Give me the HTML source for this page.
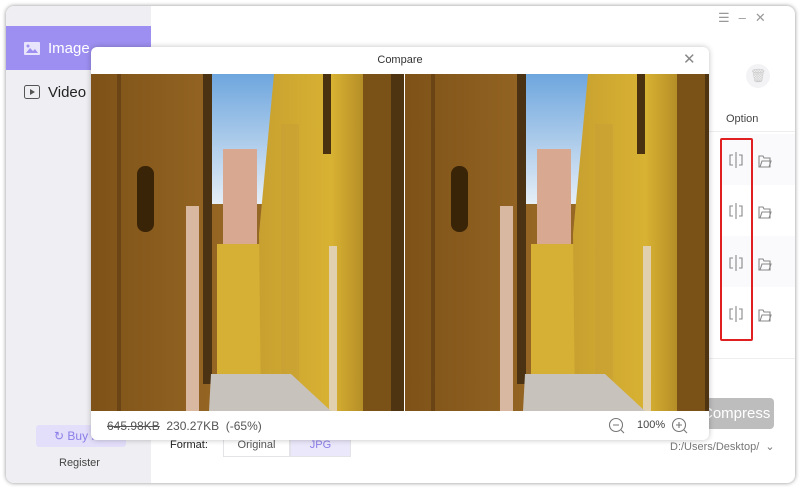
<!DOCTYPE html>
<html><head><meta charset="utf-8"><style>
*{margin:0;padding:0;box-sizing:border-box}
body{width:800px;height:488px;background:#fff;font-family:"Liberation Sans","Noto Sans CJK SC",sans-serif;position:relative;overflow:hidden}
.win{position:absolute;left:6px;top:6px;width:789px;height:477px;background:#fff;border-radius:8px;box-shadow:0 0 4px rgba(0,0,0,.45);overflow:hidden}
.side{position:absolute;left:0;top:0;width:145px;height:477px;background:#efeff3}
.nav{position:absolute;left:0;width:145px;height:44px;font-size:15px;color:#222;display:flex;align-items:center;padding-left:18px}
.abs{position:absolute}
.row{position:absolute;left:714px;width:75px;height:51px}
.dlg{position:absolute;left:91px;top:47px;width:618px;height:393px;background:#fff;border-radius:6px;box-shadow:0 0 6px rgba(0,0,0,.25);overflow:hidden}
</style></head><body>
<div class="win">
 <div class="side">
  <div class="nav" style="top:20px;background:#9d8ff1;color:#fff"><svg width="16" height="13" style="margin-right:8px"><rect x="0" y="0" width="16" height="13" rx="1" fill="#e8e4fc"/><path d="M2 11 L6 6 L9 9 L11 7 L14 11Z" fill="#9d8ff1"/><circle cx="4" cy="4" r="1.5" fill="#9d8ff1"/></svg>Image</div>
  <div class="nav" style="top:64px"><svg width="16" height="14" style="margin-right:8px"><rect x="0.5" y="0.5" width="15" height="13" rx="2" fill="none" stroke="#555"/><path d="M6 4 L11 7 L6 10Z" fill="#555"/></svg>Video</div>
  <div class="abs" style="left:30px;top:419px;width:90px;height:22px;background:#e3defa;border-radius:3px;color:#8a7ee8;font-size:12px;padding:4px 0 0 18px">↻ Buy Now</div>
  <div class="abs" style="left:53px;top:451px;font-size:11px;color:#444">Register</div>
 </div>
 <div class="abs" style="left:712px;top:4px;font-size:13px;color:#999;letter-spacing:9px">☰–✕</div>
 <div class="abs" style="left:740px;top:58px;width:24px;height:24px;border-radius:12px;background:#f3f3f5;color:#ccc;font-size:13px;text-align:center;line-height:24px">🗑</div>
 <div class="abs" style="left:720px;top:107px;font-size:11px;color:#444">Option</div>
 <div class="abs" style="left:700px;top:125px;width:89px;height:1px;background:#eee"></div>
 <div class="row" style="top:128px;background:#fafafc"></div>
 <div class="row" style="top:230px;background:#fafafc"></div>
 <div class="abs" style="left:714px;top:132px;width:33px;height:203px;border:2px solid #e02020;border-radius:2px"></div>
 <div class="abs" style="left:700px;top:352px;width:89px;height:1px;background:#eee"></div>
 <div class="abs" style="left:690px;top:392px;width:78px;height:31px;background:#bdbdbd;border-radius:4px;color:#fff;font-size:15px;line-height:31px;padding-left:6px">Compress</div>
 <div class="abs" style="left:664px;top:434px;font-size:11px;color:#777">D:/Users/Desktop/ &nbsp;⌄</div>
 <div class="abs" style="left:164px;top:433px;font-size:11px;color:#222">Format:</div>
 <div class="abs" style="left:217px;top:428px;width:67px;height:23px;border:1px solid #e4e4e8;font-size:11px;color:#555;text-align:center;line-height:21px">Original</div>
 <div class="abs" style="left:284px;top:428px;width:61px;height:23px;background:#ebe8fb;border:1px solid #e4e4e8;font-size:11px;color:#8a7ee8;text-align:center;line-height:21px">JPG</div>
</div>
<svg class="abs" style="left:0;top:0" width="800" height="488">
 <g fill="none" stroke="#888" stroke-width="1.1">
  <g id="ic"><path d="M733 155 h-3 v10 h3 M739 155 h3 v10 h-3"/><path d="M736 152 v16"/><path d="M759 156 h4 l1 2 h6 v9 h-11z M760 167 l2-6 h9 l-2 6"/></g>
  <use href="#ic" y="51"/><use href="#ic" y="103"/><use href="#ic" y="154"/>
 </g>
</svg>
<div class="dlg">
 <div class="abs" style="left:0;top:7px;width:618px;text-align:center;font-size:11px;color:#333">Compare</div>
 <div class="abs" style="left:592px;top:3px;font-size:15px;color:#888">✕</div>
 <svg class="abs" style="left:0;top:27px" width="618" height="337">
  <defs>
   <linearGradient id="sky" x1="0" y1="0" x2="0" y2="1"><stop offset="0" stop-color="#6ea6de"/><stop offset="1" stop-color="#e6eef6"/></linearGradient>
   <linearGradient id="lw" x1="0" y1="0" x2="1" y2="0"><stop offset="0" stop-color="#7e5218"/><stop offset=".5" stop-color="#9a6a26"/><stop offset="1" stop-color="#6a4616"/></linearGradient>
   <linearGradient id="rw" x1="0" y1="0" x2="1" y2="0"><stop offset="0" stop-color="#c8a030"/><stop offset=".5" stop-color="#d8b232"/><stop offset=".75" stop-color="#b08826"/><stop offset="1" stop-color="#5a3c14"/></linearGradient>
   <g id="img">
    <rect width="313" height="337" fill="url(#lw)"/>
    <rect x="120" y="0" width="66" height="130" fill="url(#sky)"/>
    <rect x="132" y="75" width="34" height="100" fill="#d8a890"/>
    <rect x="126" y="170" width="48" height="135" fill="#d6b035"/>
    <path d="M183 0 L313 0 L313 337 L170 337 L168 160Z" fill="url(#rw)"/>
    <rect x="190" y="50" width="18" height="270" fill="#c8a036" opacity=".6"/>
    <rect x="232" y="0" width="8" height="80" fill="#4a3210"/>
    <rect x="272" y="0" width="41" height="337" fill="#7a5218"/>
    <rect x="300" y="0" width="13" height="337" fill="#4e3410"/>
    <rect x="112" y="0" width="9" height="310" fill="#4a3212"/>
    <rect x="46" y="92" width="17" height="66" rx="8" fill="#3a2408"/>
    <rect x="95" y="132" width="13" height="205" fill="#d8b8a0"/>
    <rect x="26" y="0" width="4" height="337" fill="#6a4414"/>
    <rect x="238" y="172" width="8" height="165" fill="#e0d0b0"/>
    <path d="M120 300 L200 300 L240 337 L118 337Z" fill="#c8c2bc"/>
   </g>
  </defs>
  <use href="#img"/>
  <use href="#img" x="314"/>
  <rect x="313" y="0" width="1" height="337" fill="#fff"/>
 </svg>
 <div class="abs" style="left:16px;top:372px;font-size:12px;color:#555"><s>645.98KB</s>&nbsp; 230.27KB&nbsp; (-65%)</div>
 <svg class="abs" style="left:516px;top:369px" width="90" height="20" fill="none" stroke="#777" stroke-width="1.1">
  <circle cx="9" cy="9" r="6.5"/><path d="M6 9h6M14 14l3 3"/>
  <circle cx="72" cy="9" r="6.5"/><path d="M69 9h6M72 6v6M77 14l3 3"/>
 </svg>
 <div class="abs" style="left:546px;top:372px;font-size:11px;color:#444">100%</div>
</div>
</body></html>
